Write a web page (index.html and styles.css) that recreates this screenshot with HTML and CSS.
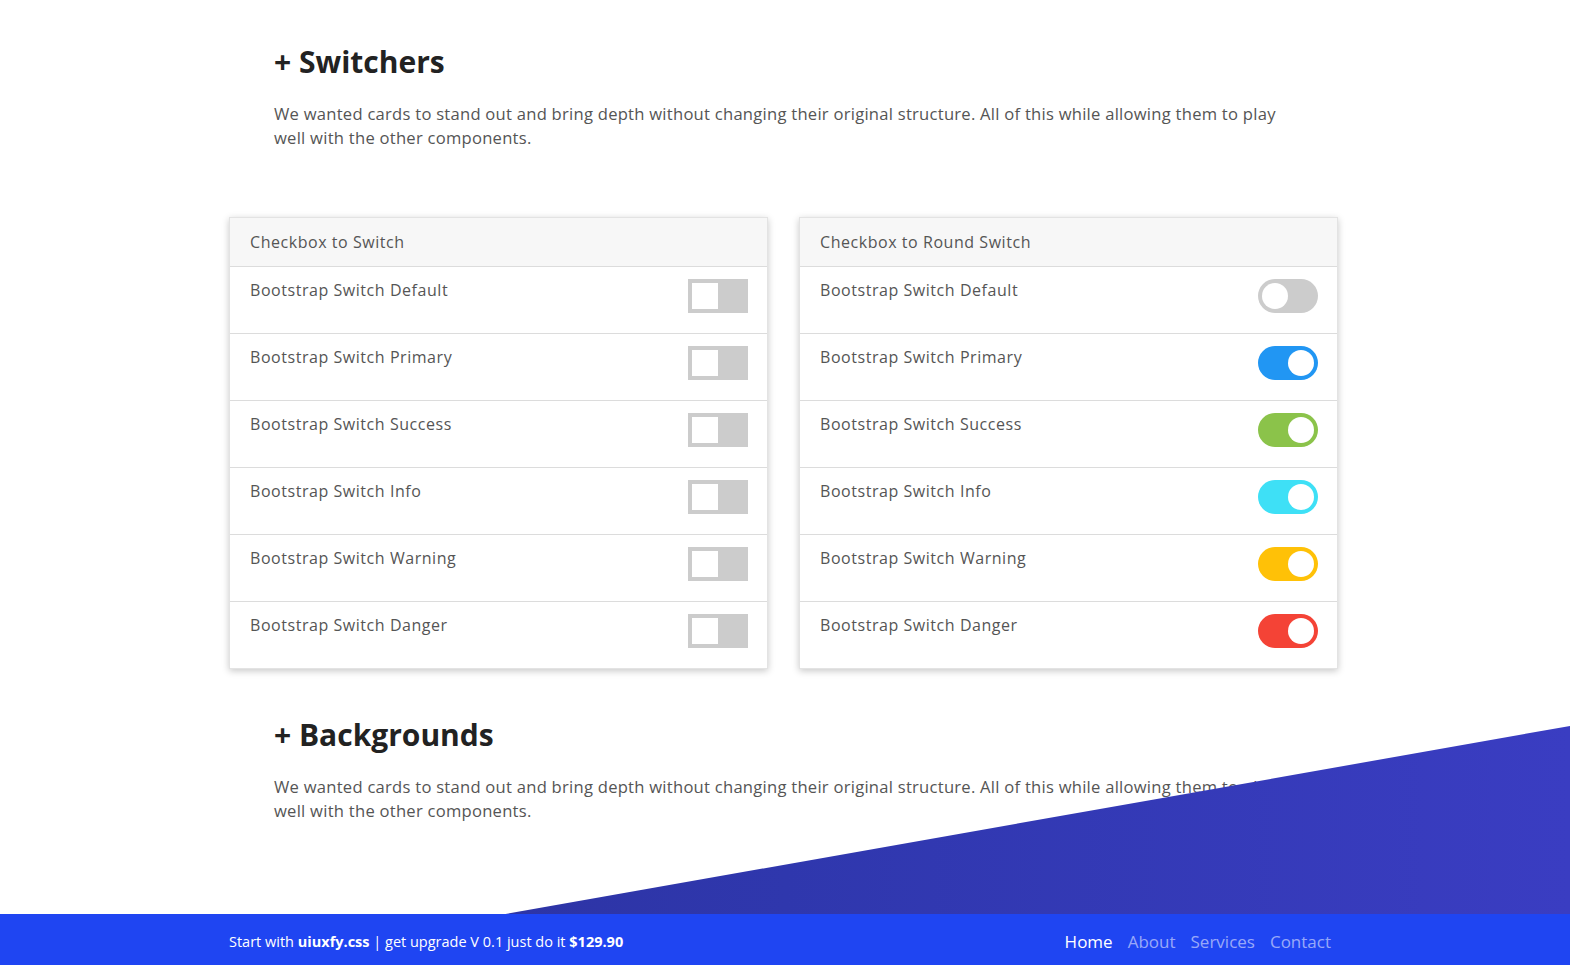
FILE: index.html
```html
<!DOCTYPE html>
<html lang="en">
<head>
<meta charset="utf-8">
<title>Switchers</title>
<link rel="stylesheet" href="styles.css">
</head>
<body>
<div class="page">
  <main class="container">
    <section class="intro">
      <h2 class="title">+ Switchers</h2>
      <p class="lead">We wanted cards to stand out and bring depth without changing their original structure. All of this while allowing them to play well with the other components.</p>
    </section>

    <div class="cards">
      <div class="card">
        <div class="card-header">Checkbox to Switch</div>
        <div class="row"><span>Bootstrap Switch Default</span><span class="sw sq"><span class="knob"></span></span></div>
        <div class="row"><span>Bootstrap Switch Primary</span><span class="sw sq"><span class="knob"></span></span></div>
        <div class="row"><span>Bootstrap Switch Success</span><span class="sw sq"><span class="knob"></span></span></div>
        <div class="row"><span>Bootstrap Switch Info</span><span class="sw sq"><span class="knob"></span></span></div>
        <div class="row"><span>Bootstrap Switch Warning</span><span class="sw sq"><span class="knob"></span></span></div>
        <div class="row"><span>Bootstrap Switch Danger</span><span class="sw sq"><span class="knob"></span></span></div>
      </div>
      <div class="card">
        <div class="card-header">Checkbox to Round Switch</div>
        <div class="row"><span>Bootstrap Switch Default</span><span class="sw rd"><span class="knob"></span></span></div>
        <div class="row"><span>Bootstrap Switch Primary</span><span class="sw rd on primary"><span class="knob"></span></span></div>
        <div class="row"><span>Bootstrap Switch Success</span><span class="sw rd on success"><span class="knob"></span></span></div>
        <div class="row"><span>Bootstrap Switch Info</span><span class="sw rd on info"><span class="knob"></span></span></div>
        <div class="row"><span>Bootstrap Switch Warning</span><span class="sw rd on warning"><span class="knob"></span></span></div>
        <div class="row"><span>Bootstrap Switch Danger</span><span class="sw rd on danger"><span class="knob"></span></span></div>
      </div>
    </div>

    <section class="intro second">
      <h2 class="title">+ Backgrounds</h2>
      <p class="lead">We wanted cards to stand out and bring depth without changing their original structure. All of this while allowing them to play well with the other components.</p>
    </section>
  </main>
  <div class="slant"></div>
</div>
<footer class="footer">
  <div class="footer-inner">
    <div class="promo">Start with <b>uiuxfy.css</b> | get upgrade V 0.1 just do it <b>$129.90</b></div>
    <nav class="nav">
      <a class="active">Home</a>
      <a>About</a>
      <a>Services</a>
      <a>Contact</a>
    </nav>
  </div>
</footer>
</body>
</html>
```

FILE: styles.css
```css
* { box-sizing: border-box; }
html, body { margin: 0; padding: 0; }
body {
  font-family: "Open Sans", "Noto Sans", Arial, sans-serif;
  color: #555;
  background: #fff;
}
.page {
  position: relative;
  height: 914px;
  overflow: hidden;
}
.container {
  width: 1112px;
  margin: 0 auto;
}
.intro {
  padding: 44px 45px 0 45px;
}
.intro.second {
  padding-top: 48px;
}
.title {
  margin: 0;
  font-size: 30px;
  line-height: 36px;
  font-weight: 700;
  color: #222;
}
.lead {
  margin: 22px 0 0 0;
  font-size: 16.6px;
  line-height: 24px;
  letter-spacing: 0.25px;
  color: #555;
  font-weight: 400;
}
.cards {
  margin-top: 67px;
  display: flex;
  gap: 31px;
}
.card {
  width: 539px;
  background: #fff;
  border: 1px solid #e3e3e3;
  box-shadow: 0 2px 7px rgba(0,0,0,0.22);
}
.card-header {
  height: 49px;
  padding: 12px 20px;
  line-height: 24px;
  font-size: 16px;
  letter-spacing: 0.55px;
  background: #f7f7f7;
  border-bottom: 1px solid #dcdcdc;
  color: #555;
}
.row {
  height: 67px;
  padding: 11px 19px 0 20px;
  display: flex;
  justify-content: space-between;
  align-items: flex-start;
  line-height: 24px;
  font-size: 16px;
  letter-spacing: 0.55px;
  color: #555;
  border-bottom: 1px solid #dcdcdc;
}
.row:last-child { border-bottom: 0; height: 66px; }
.sw {
  position: relative;
  flex: none;
  width: 60px;
  height: 34px;
  margin-top: 1px;
  background: #ccc;
}
.sw .knob {
  position: absolute;
  left: 4px;
  top: 4px;
  width: 26px;
  height: 26px;
  background: #fff;
}
.sw.rd { border-radius: 17px; }
.sw.rd .knob { border-radius: 50%; }
.sw.on .knob { left: 30px; }
.sw.primary { background: #2196f3; }
.sw.success { background: #8bc34a; }
.sw.info { background: #3ee0f6; }
.sw.warning { background: #ffc107; }
.sw.danger { background: #f44336; }

.slant {
  position: absolute;
  left: 0;
  right: 0;
  bottom: 0;
  height: 188px;
  background: linear-gradient(90deg, #2a2f98 0%, #2f37ad 50%, #3a3dc2 100%);
  clip-path: polygon(32.2% 100%, 100% 0, 100% 100%);
}
.footer {
  height: 51px;
  background: #1f45f2;
  color: #fff;
}
.footer-inner {
  width: 1112px;
  margin: 0 auto;
  height: 51px;
  padding-top: 4px;
  display: flex;
  align-items: center;
  justify-content: space-between;
  padding-right: 10px;
}
.promo {
  font-size: 14.5px;
}
.promo b { font-weight: 700; }
.nav {
  display: flex;
  gap: 15px;
  font-size: 17px;
}
.nav a {
  color: rgba(255,255,255,0.55);
  text-decoration: none;
}
.nav a.active { color: #fff; }
```
